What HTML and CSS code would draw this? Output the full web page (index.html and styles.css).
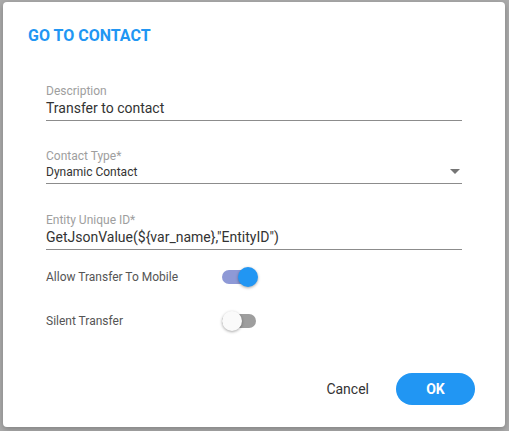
FILE: index.html
```html
<!DOCTYPE html>
<html>
<head>
<meta charset="utf-8">
<link rel="stylesheet" href="styles.css">
</head>
<body>
<div class="backdrop">
  <div class="dialog">
    <h1 class="title">GO TO CONTACT</h1>
    <div class="form">
      <div class="field f1">
        <label class="label">Description</label>
        <div class="value">Transfer to contact</div>
      </div>
      <div class="field f2">
        <label class="label">Contact Type*</label>
        <div class="value small select">Dynamic Contact<span class="arrow"></span></div>
      </div>
      <div class="field f3">
        <label class="label">Entity Unique ID*</label>
        <div class="value">GetJsonValue(${var_name},"EntityID")</div>
      </div>
      <div class="toggle-row r1">
        <span class="tlabel">Allow Transfer To Mobile</span>
        <span class="switch on"><span class="track"></span><span class="thumb"></span></span>
      </div>
      <div class="toggle-row r2">
        <span class="tlabel">Silent Transfer</span>
        <span class="switch"><span class="track"></span><span class="thumb"></span></span>
      </div>
    </div>
    <div class="actions">
      <button class="btn cancel">Cancel</button>
      <button class="btn ok">OK</button>
    </div>
  </div>
</div>
</body>
</html>
```
FILE: styles.css
```css
html, body { margin: 0; padding: 0; }
body {
  background: #ababab;
  font-family: Roboto, "Liberation Sans", sans-serif;
  width: 509px; height: 431px; overflow: hidden;
}
.backdrop {
  padding: 2px 4px 4px 3px;
  box-sizing: border-box;
  height: 431px;
}
.dialog {
  background: #fff;
  border-radius: 4px;
  height: 425px;
  box-sizing: border-box;
  padding: 24px 0 0 25px;
  box-shadow: 0 2px 6px rgba(0,0,0,0.25);
  display: flex;
  flex-direction: column;
}
.title {
  margin: 0;
  font-size: 16px;
  line-height: 20px;
  font-weight: 700;
  color: #2196f3;
}
.form {
  margin-left: 18px;
  width: 416px;
  display: flex;
  flex-direction: column;
}
.field {
  border-bottom: 1px solid #8c8c8c;
}
.f1 { margin-top: 38px; }
.f2 { margin-top: 28px; }
.f3 { margin-top: 29px; }
.label {
  display: block;
  font-size: 12px;
  line-height: 14px;
  color: #9e9e9e;
}
.value {
  font-size: 14px;
  line-height: 20px;
  color: #333;
  padding-bottom: 2px;
}
.value.small {
  font-size: 12px;
  line-height: 18px;
}
.select {
  position: relative;
}
.arrow {
  position: absolute;
  right: 2px;
  top: 6px;
  width: 0; height: 0;
  border-left: 5px solid transparent;
  border-right: 5px solid transparent;
  border-top: 5px solid #757575;
}
.toggle-row {
  display: flex;
  align-items: center;
  height: 24px;
}
.r1 { margin-top: 15px; }
.r2 { margin-top: 20px; }
.tlabel {
  width: 176px;
  font-size: 12px;
  color: #555;
}
.switch {
  position: relative;
  width: 36px;
  height: 24px;
}
.track {
  position: absolute;
  left: 0; top: 5px;
  width: 34px; height: 14px;
  border-radius: 7px;
  background: #9e9e9e;
}
.thumb {
  position: absolute;
  top: 2px; left: 0;
  width: 20px; height: 20px;
  border-radius: 50%;
  background: #fafafa;
  box-shadow: 0 1px 3px rgba(0,0,0,0.35);
}
.switch.on .track { background: #8e99d6; }
.switch.on .thumb { left: 16px; background: #2196f3; }
.actions {
  margin-top: auto;
  display: flex;
  justify-content: flex-end;
  align-items: center;
  gap: 19px;
  padding: 0 30px 22px 0;
}
.btn {
  font-family: Roboto, "Liberation Sans", sans-serif;
  border: none;
  background: none;
  font-size: 14px;
  cursor: pointer;
}
.cancel { color: #333; padding: 0 8px; }
.ok {
  background: #2196f3;
  color: #fff;
  font-weight: 700;
  width: 79px;
  height: 32px;
  border-radius: 16px;
}
```
